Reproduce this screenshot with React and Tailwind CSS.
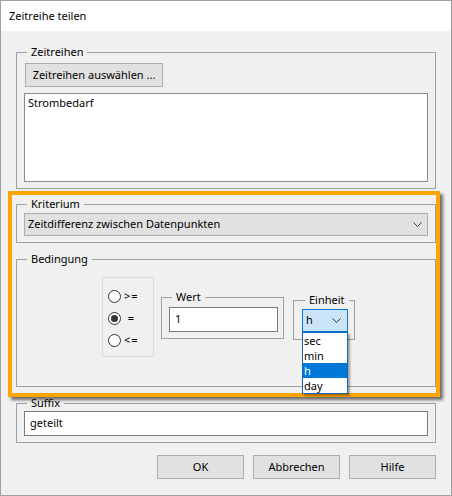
import { useState } from 'react'

const options = ['sec', 'min', 'h', 'day']

function Chevron({ color = '#404040' }) {
  return (
    <svg width="9" height="5" viewBox="0 0 9 5" className="shrink-0">
      <polyline points="0.5,0.5 4.5,4.5 8.5,0.5" fill="none" stroke={color} strokeWidth="1" />
    </svg>
  )
}

function Group({ label, className = '', children }) {
  return (
    <fieldset className={`border border-[#a0a0a0] ${className}`}>
      <legend className="ml-[3px] px-[4px] leading-[16px]">{label}</legend>
      {children}
    </fieldset>
  )
}

function Radio({ label, checked }) {
  return (
    <div className="flex items-center h-[22px]">
      <span className="w-[13px] h-[13px] rounded-full border border-[#333] bg-white flex items-center justify-center">
        {checked && <span className="w-[7px] h-[7px] rounded-full bg-[#333]" />}
      </span>
      <span className="ml-[3px] tracking-[1px] whitespace-pre">{label}</span>
    </div>
  )
}

export default function App() {
  const [unit] = useState('h')

  return (
    <div className="relative w-[452px] h-[496px] bg-[#f0f0f0] border border-[#a0a0a0] font-['Noto_Sans',sans-serif] text-[11px] text-black overflow-hidden">
      {/* Title bar */}
      <div className="h-[30px] bg-white pl-[8px] flex items-center">Zeitreihe teilen</div>

      <div className="px-[15px] pt-[13px]">
        {/* Zeitreihen */}
        <Group label="Zeitreihen" className="px-[7px] pt-[3px] pb-[6px]">
          <button className="ml-px w-[138px] h-[24px] bg-[#e1e1e1] border border-[#adadad] flex items-center justify-center">
            Zeitreihen auswählen ...
          </button>
          <div className="mt-[6px] h-[89px] bg-white border border-[#8c8c8c] px-[3px] pt-px">Strombedarf</div>
        </Group>

        {/* Kriterium */}
        <Group label="Kriterium" className="mt-[7px] px-[7px] pt-px pb-[6px]">
          <div className="h-[23px] bg-[#e1e1e1] border border-[#adadad] flex items-center justify-between pl-[3px] pr-[5px]">
            <span>Zeitdifferenz zwischen Datenpunkten</span>
            <Chevron />
          </div>
        </Group>

        {/* Bedingung */}
        <Group label="Bedingung" className="mt-[8px] px-[7px] pt-[10px] pb-[29px]">
          <div className="flex items-start ml-[78px]">
            <div className="w-[52px] h-[80px] border border-[#dcdcdc] pl-[5px] pt-[7px]">
              <Radio label=">=" />
              <Radio label=" =" checked />
              <Radio label="<=" />
            </div>

            <Group label="Wert" className="ml-[7px] mt-[12px] w-[123px] pl-[7px] pr-[5px] pt-[2px] pb-[6px]">
              <div className="w-[109px] h-[25px] bg-white border border-[#7a7a7a] flex items-center pl-[5px]">1</div>
            </Group>

            <Group label="Einheit" className="ml-[9px] mt-[15px] w-[61px] pl-[8px] pr-[5px] pt-px pb-[7px]">
              <div className="relative w-[46px]">
                <div className="h-[23px] bg-[#cce4f7] border border-[#0078d7] flex items-center justify-between pl-[3px] pr-[6px]">
                  <span>{unit}</span>
                  <Chevron color="#303030" />
                </div>
                <div className="absolute left-0 top-full w-[46px] bg-white border border-[#1b62b8] shadow-[2px_2px_2px_rgba(0,0,0,0.35)] z-10">
                  {options.map((o) => (
                    <div
                      key={o}
                      className={`h-[15px] leading-[15px] pl-[1px] ${o === unit ? 'bg-[#0078d7] text-white' : ''}`}
                    >
                      {o}
                    </div>
                  ))}
                </div>
              </div>
            </Group>
          </div>
        </Group>

        {/* Suffix */}
        <Group label="Suffix" className="mt-[8px] px-[7px] pb-[6px]">
          <div className="h-[25px] bg-white border border-[#7a7a7a] flex items-center pl-[5px]">geteilt</div>
        </Group>

        {/* Buttons */}
        <div className="mt-[12px] flex justify-end gap-[9px]">
          {['OK', 'Abbrechen', 'Hilfe'].map((b) => (
            <button key={b} className="w-[87px] h-[24px] bg-[#e1e1e1] border border-[#adadad] flex items-center justify-center">
              {b}
            </button>
          ))}
        </div>
      </div>

      {/* Highlight overlay */}
      <div className="absolute left-[7px] top-[190px] w-[432px] h-[206px] border-4 border-[#ffa500] shadow-[3px_3px_3px_rgba(0,0,0,0.55)] pointer-events-none" />
    </div>
  )
}
